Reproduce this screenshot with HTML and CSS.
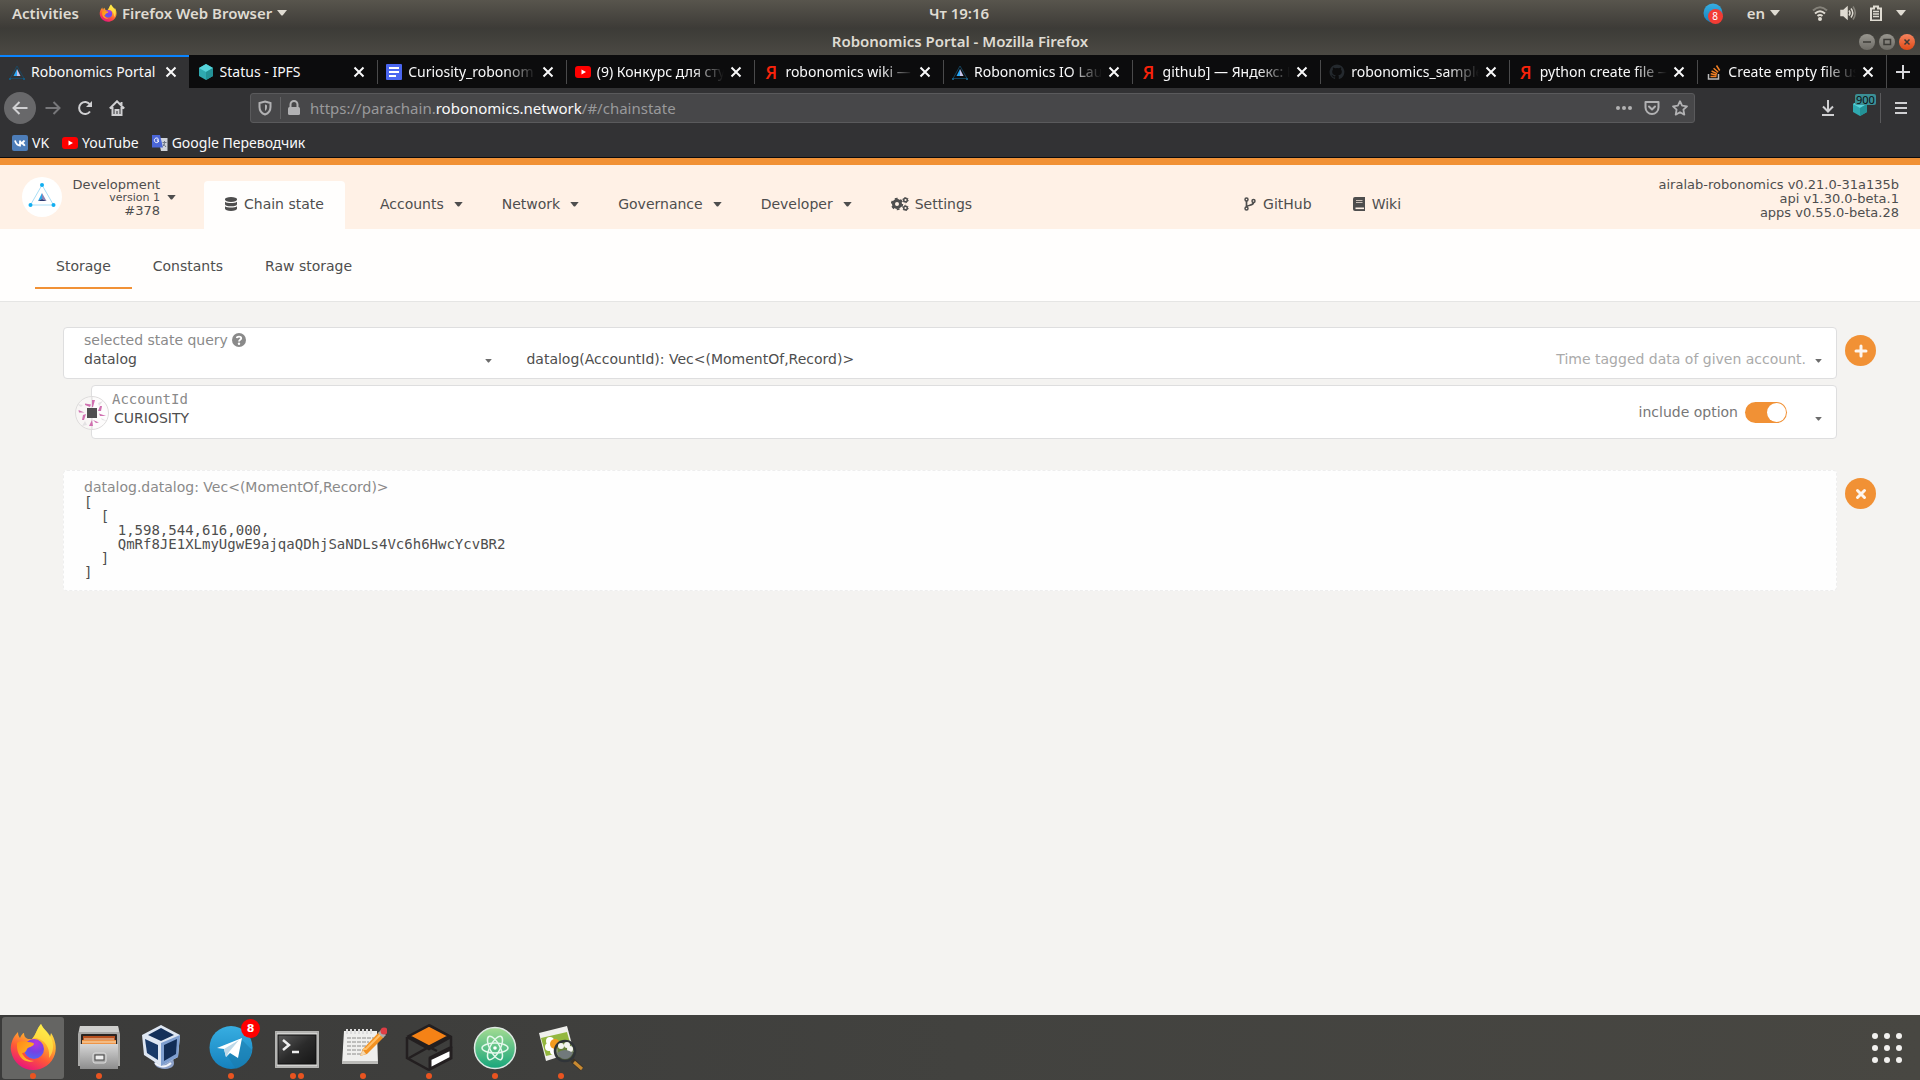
FILE: index.html
```html
<!DOCTYPE html>
<html lang="en">
<head>
<meta charset="utf-8">
<title>Robonomics Portal</title>
<link rel="stylesheet" href="styles.css">
</head>
<body>
<svg class="defs" aria-hidden="true">
  <defs>
    <linearGradient id="ffOuter" x1="0.8" y1="0" x2="0.3" y2="1"><stop offset="0" stop-color="#fff44f"/><stop offset="0.35" stop-color="#ffb02e"/><stop offset="0.65" stop-color="#ff5a36"/><stop offset="1" stop-color="#e8117f"/></linearGradient>
    <radialGradient id="ffGlobe" cx="0.6" cy="0.2" r="0.9"><stop offset="0" stop-color="#b833e1"/><stop offset="0.5" stop-color="#7542e5"/><stop offset="1" stop-color="#4a6cf7"/></radialGradient>
    <linearGradient id="ffFlame" x1="0" y1="0" x2="1" y2="1"><stop offset="0" stop-color="#ff8a16"/><stop offset="1" stop-color="#ffc32c"/></linearGradient>
    <linearGradient id="tgBlue" x1="0" y1="0" x2="0" y2="1"><stop offset="0" stop-color="#37aee2"/><stop offset="1" stop-color="#1581bd"/></linearGradient>
    <linearGradient id="steel" x1="0" y1="0" x2="0" y2="1"><stop offset="0" stop-color="#d6d6d6"/><stop offset="1" stop-color="#8d8d8d"/></linearGradient>
    <linearGradient id="atomGreen" x1="0" y1="0" x2="0" y2="1"><stop offset="0" stop-color="#a4dc92"/><stop offset="1" stop-color="#17a57b"/></linearGradient>
    <linearGradient id="screen" x1="0" y1="0" x2="1" y2="1"><stop offset="0" stop-color="#5a5a5a"/><stop offset="0.5" stop-color="#2b2b2b"/><stop offset="1" stop-color="#161616"/></linearGradient>
  </defs>
  <symbol id="firefox" viewBox="0 0 48 48">
    <path d="M2 28C1 21 4 14 9 9c0 3 1 5 2 6 1-3 3-5 4-5 0 3 1 5 4 6h4C27 12 28 5 32 1c2 5 7 8 9 13l1-4c4 6 6 14 4 21-3 10-12 16-22 16S4 40 2 28z" fill="url(#ffOuter)"/>
    <path d="M32 1c2 5 9 9 11 16 2 7 1 13-3 18 1-8-2-15-8-18-3-2-7-2-9-1 4-4 5-11 9-15z" fill="#fff04a" opacity=".65"/>
    <circle cx="25" cy="26" r="10" fill="url(#ffGlobe)"/>
    <path d="M8 20c3-3 8-1 11-1 4 0 6 1 6 2-1 3-6 3-7 5-1 3-3 4-5 4 2 5 7 8 12 8-9 3-18-4-17-18z" fill="url(#ffFlame)"/>
  </symbol>
  <symbol id="caret" viewBox="0 0 10 6"><path d="M0 0h10L6 5Q5 6 4 5z" fill="currentColor"/></symbol>
  <symbol id="close" viewBox="0 0 12 12"><path d="M1.500 1.500l9 9M10.500 1.500l-9 9" stroke="currentColor" stroke-width="2" fill="none"/></symbol>
  <symbol id="robonomics" viewBox="0 0 16 16"><path d="M8 2L1 14.500h14z" fill="none" stroke="#174c6c" stroke-width=".8"/><path d="M8 5v7H4.500z" fill="#2aa7f5"/><path d="M8 5l3.500 7H8z" fill="#c6c3ea"/><path d="M0 14h2v2H0zM14 14h2v2h-2z" fill="#15577d"/></symbol>
  <symbol id="ipfs" viewBox="0 0 16 16"><path d="M8 0l7 4v8l-7 4-7-4V4z" fill="#2fa9b0"/><path d="M8 0l7 4-7 4-7-4z" fill="#56d3da"/><path d="M8 8l7-4v8l-7 4z" fill="#239297"/></symbol>
  <symbol id="youtube" viewBox="0 0 16 16"><rect y="2" width="16" height="12" rx="3" fill="#f00"/><path d="M6.500 5.500v5L11 8z" fill="#fff"/></symbol>
  <symbol id="github" viewBox="0 0 16 16"><path d="M8 .5a7.500 7.500 0 0 0-2.400 14.600c.4.100.5-.2.500-.4v-1.400c-2.100.5-2.500-.9-2.500-.9-.4-.9-.9-1.100-.9-1.100-.7-.5.1-.5.1-.5.800.1 1.200.8 1.200.8.700 1.200 1.800.9 2.200.7.1-.5.300-.9.500-1.100-1.700-.2-3.500-.8-3.500-3.700 0-.8.300-1.500.8-2-.1-.2-.4-1 .1-2 0 0 .6-.2 2.100.8a7 7 0 0 1 3.700 0c1.400-1 2-.8 2-.8.500 1 .2 1.800.1 2 .5.500.8 1.200.8 2 0 2.900-1.800 3.500-3.500 3.700.3.200.5.700.5 1.400v2.100c0 .2.1.500.5.400A7.500 7.500 0 0 0 8 .5z" fill="#24292e"/></symbol>
</svg>

<div class="desktop">
<header class="topbar">
  <div class="topbar-side">
    <button class="sys" type="button">Activities</button>
    <button class="sys" type="button"><svg class="i18"><use href="#firefox"/></svg>Firefox Web Browser<svg class="sys-caret"><use href="#caret"/></svg></button>
  </div>
  <button class="sys" type="button">Чт 19:16</button>
  <div class="topbar-side topbar-end">
    <span class="tray-tg"><svg class="i20" viewBox="0 0 20 20"><circle cx="10" cy="10" r="9.500" fill="url(#tgBlue)"/></svg><span class="tray-count">8</span></span>
    <button class="sys lang" type="button">en<svg class="sys-caret"><use href="#caret"/></svg></button>
    <span class="tray">
      <svg class="i16" viewBox="0 0 16 16" fill="none" stroke="#dfdbd2" stroke-width="2"><path d="M1 5.500Q8-1 15 5.500" stroke="#85827a"/><path d="M3 8.500Q8 4 13 8.500"/><path d="M5.500 11Q8 9 10.500 11"/><circle cx="8" cy="14" r="1" fill="#dfdbd2"/></svg>
      <svg class="i16" viewBox="0 0 16 16" fill="none" stroke="#dfdbd2" stroke-width="1.500"><path d="M1 5.500h2.500L7 2.500v11L3.500 10.500H1z" fill="#dfdbd2"/><path d="M9 5.500q2 2.500 0 5M11 3.500q3.500 4.500 0 9"/><path d="M13 1.500q4.500 6.500 0 13" stroke="#85827a"/></svg>
      <svg class="i16" viewBox="0 0 16 16" fill="none" stroke="#dfdbd2"><path d="M3 3.500h3v-2h4v2h3v12H3z" stroke-width="2"/><path d="M5 6.500h6M5 9h6M5 11.500h6" stroke-width="1.500"/></svg>
      <svg class="sys-caret"><use href="#caret"/></svg>
    </span>
  </div>
</header>

<div class="titlebar">
  <h1 class="window-title">Robonomics Portal - Mozilla Firefox</h1>
  <div class="window-buttons">
    <button class="wb" type="button" aria-label="Minimize"><svg viewBox="0 0 16 16"><path d="M4 8h8" stroke="#3c3b37" stroke-width="1.500"/></svg></button>
    <button class="wb" type="button" aria-label="Maximize"><svg viewBox="0 0 16 16"><path d="M5 5.500h6.500v5H5z" stroke="#3c3b37" stroke-width="1.500" fill="none"/></svg></button>
    <button class="wb wb-close" type="button" aria-label="Close"><svg viewBox="0 0 16 16"><path d="M5.500 5.500l5 5M10.500 5.500l-5 5" stroke="#3c3b37" stroke-width="1.500"/></svg></button>
  </div>
</div>

<div class="tabstrip">
  <div class="tab tab-active"><svg class="i16"><use href="#robonomics"/></svg><span class="tab-title">Robonomics Portal</span><button class="tab-close" type="button" aria-label="Close tab"><svg><use href="#close"/></svg></button></div>
  <div class="tab"><svg class="i16"><use href="#ipfs"/></svg><span class="tab-title">Status - IPFS</span><button class="tab-close" type="button" aria-label="Close tab"><svg><use href="#close"/></svg></button></div>
  <div class="tab"><svg class="i16" viewBox="0 0 16 16"><rect width="16" height="16" rx="1" fill="#4a66f0"/><path d="M3 4h10M3 8h10M3 12h7" stroke="#fff" stroke-width="2"/></svg><span class="tab-title fade">Curiosity_robonom</span><button class="tab-close" type="button" aria-label="Close tab"><svg><use href="#close"/></svg></button></div>
  <div class="tab"><svg class="i16"><use href="#youtube"/></svg><span class="tab-title fade">(9) Конкурс для сту</span><button class="tab-close" type="button" aria-label="Close tab"><svg><use href="#close"/></svg></button></div>
  <div class="tab"><span class="ya">Я</span><span class="tab-title fade">robonomics wiki —</span><button class="tab-close" type="button" aria-label="Close tab"><svg><use href="#close"/></svg></button></div>
  <div class="tab"><svg class="i16"><use href="#robonomics"/></svg><span class="tab-title fade">Robonomics IO Lau</span><button class="tab-close" type="button" aria-label="Close tab"><svg><use href="#close"/></svg></button></div>
  <div class="tab"><span class="ya">Я</span><span class="tab-title fade">github] — Яндекс: Н</span><button class="tab-close" type="button" aria-label="Close tab"><svg><use href="#close"/></svg></button></div>
  <div class="tab"><svg class="i16"><use href="#github"/></svg><span class="tab-title fade">robonomics_sample</span><button class="tab-close" type="button" aria-label="Close tab"><svg><use href="#close"/></svg></button></div>
  <div class="tab"><span class="ya">Я</span><span class="tab-title fade">python create file —</span><button class="tab-close" type="button" aria-label="Close tab"><svg><use href="#close"/></svg></button></div>
  <div class="tab"><svg class="i16" viewBox="0 0 16 16" fill="none"><path d="M2.500 10v5h10v-5" stroke="#bcbbbb" stroke-width="1.500"/><path d="M4.500 12.500h6M4.700 9.800l6 1.200M5.600 7l5.500 2.600M7.600 4.200l4.600 4M10.500 1.500l3.200 5" stroke="#f48024" stroke-width="1.500"/></svg><span class="tab-title fade">Create empty file us</span><button class="tab-close" type="button" aria-label="Close tab"><svg><use href="#close"/></svg></button></div>
  <button class="tab-new" type="button" aria-label="New tab"><svg class="i16" viewBox="0 0 16 16"><path d="M8 1v14M1 8h14" stroke="#d7d7db" stroke-width="2"/></svg></button>
</div>

<div class="navbar">
  <div class="nav-buttons">
    <button class="nb nb-back" type="button" aria-label="Back"><svg class="i16" viewBox="0 0 16 16"><path d="M15.500 8H1.500M7.500 2l-6 6 6 6" /></svg></button>
    <button class="nb nb-off" type="button" aria-label="Forward"><svg class="i16" viewBox="0 0 16 16"><path d="M.5 8h14M8.500 2l6 6-6 6"/></svg></button>
    <button class="nb" type="button" aria-label="Reload"><svg class="i16" viewBox="0 0 16 16"><path d="M13 11.500A6 6 0 1 1 13 4.500"/><path d="M15 1v6H9z" fill="currentColor" stroke="none"/></svg></button>
    <button class="nb" type="button" aria-label="Home"><svg class="i16" viewBox="0 0 16 16"><path d="M.8 8.500L8 1.300l7.200 7.200M3.500 7v8h9V7M6.500 15v-5h3v5M12.500 2v4"/></svg></button>
  </div>
  <div class="urlbar">
    <svg class="i16" viewBox="0 0 16 16" fill="none" stroke="#b1b1b3" stroke-width="2"><path d="M8 1.500l5.500 1.500v4c0 4-2.500 6.500-5.500 7.500-3-1-5.500-3.500-5.500-7.500V3z"/><path d="M8 4.500c2 .4 2 .6 2 2.500 0 2-.8 3.200-2 4z" fill="#b1b1b3" stroke="none"/></svg>
    <span class="url-sep"></span>
    <svg class="i16" viewBox="0 0 16 16"><path d="M4.500 8V4.500a3.500 3.500 0 0 1 7 0V8" fill="none" stroke="#b1b1b3" stroke-width="2"/><rect x="2" y="7" width="12" height="8" rx="1.500" fill="#b1b1b3"/></svg>
    <span class="url">https://parachain.<b>robonomics.network</b>/#/chainstate</span>
    <div class="url-actions">
      <button class="ib" type="button" aria-label="Page actions"><svg class="i16" viewBox="0 0 16 16" fill="#b1b1b3"><circle cx="2" cy="8" r="2"/><circle cx="8" cy="8" r="2"/><circle cx="14" cy="8" r="2"/></svg></button>
      <button class="ib" type="button" aria-label="Save to Pocket"><svg class="i16" viewBox="0 0 16 16" fill="none" stroke="#b1b1b3" stroke-width="2" stroke-linejoin="round" stroke-linecap="round"><path d="M1.500 2h13v5.500a6.500 6.500 0 0 1-13 0z"/><path d="M5 6.500l3 3 3-3"/></svg></button>
      <button class="ib" type="button" aria-label="Bookmark page"><svg class="i16" viewBox="0 0 16 16" fill="none" stroke="#b1b1b3" stroke-width="1.800" stroke-linejoin="round"><path d="M8 1.200l2.100 4.500 4.900.6-3.600 3.400.9 4.900L8 12.200l-4.300 2.400.9-4.900L1 6.300l4.900-.6z"/></svg></button>
    </div>
  </div>
  <div class="nav-end">
    <button class="ib" type="button" aria-label="Downloads"><svg class="i16" viewBox="0 0 16 16" fill="none" stroke="#d0d0d2" stroke-width="2"><path d="M8 0v11M3 6.500l5 5 5-5M2 15h12"/></svg></button>
    <button class="ib ib-ipfs" type="button" aria-label="IPFS Companion"><svg class="i16"><use href="#ipfs"/></svg><span class="ipfs-count">900</span></button>
    <button class="ib ib-menu" type="button" aria-label="Menu"><svg class="i16" viewBox="0 0 16 16" stroke="#d0d0d2" stroke-width="2"><path d="M2 3h12M2 8h12M2 13h12"/></svg></button>
  </div>
</div>

<nav class="bookmarks" aria-label="Bookmarks">
  <a href="#vk"><svg class="i16" viewBox="0 0 16 16"><rect width="16" height="16" rx="2" fill="#4d7db8"/><path d="M3 5.500q1.500 5 5 5v-5M8 8q3 0 4.500-2.500M8 8q3 0 4.800 2.700" fill="none" stroke="#fff" stroke-width="1.800"/></svg>VK</a>
  <a href="#youtube-home"><svg class="i16"><use href="#youtube"/></svg>YouTube</a>
  <a href="#translate"><svg class="i16" viewBox="0 0 16 16"><path d="M6 3h9.500v13H9z" fill="#cfd3da"/><path d="M0 0h8l3 12.500H0z" fill="#4a66d8"/><path d="M7 5H4.800M6.500 4a2.300 2.300 0 1 0 .3 2H5" stroke="#fff" fill="none"/><path d="M10.500 7.500h4M12.500 6v1.500q0 3-2 4M11.500 9l2.500 3" stroke="#6c7686" fill="none"/></svg>Google Переводчик</a>
</nav>

<div class="app">
  <header class="app-header">
    <button class="chain" type="button">
      <svg class="chain-logo" viewBox="0 0 40 40"><circle cx="20" cy="20" r="20" fill="#fff"/><path d="M20 8L8.500 28h23z" fill="none" stroke="#a9def6" stroke-width="1"/><path d="M20 16v6l-4 2z" fill="#29a6e8"/><path d="M20 16l4.500 8L20 22z" fill="#8d83b5"/><path d="M16 24l4-2 4.500 2z" fill="#2b3a72"/><g fill="#12aef0"><circle cx="20" cy="8" r="2"/><circle cx="8.500" cy="28" r="2"/><circle cx="31.500" cy="28" r="2"/></g></svg>
      <span class="chain-info"><span>Development</span><small>version 1</small><span>#378</span></span>
      <svg class="nav-caret"><use href="#caret"/></svg>
    </button>
    <nav class="menu" aria-label="Main">
      <a class="menu-item menu-active" href="#/chainstate"><svg class="i14" viewBox="0 0 14 14" fill="currentColor"><path d="M1 2.200C1 1 3.500 0 7 0s6 1 6 2.200v.6C13 4 10.500 5 7 5S1 4 1 2.800z"/><path d="M1 4.700C2.300 5.700 4.500 6 7 6s4.700-.3 6-1.300v2.500C13 8.500 10.500 9.300 7 9.300S1 8.500 1 7.200z"/><path d="M1 9.200c1.300 1 3.500 1.300 6 1.300s4.700-.3 6-1.300v2.600C13 13 10.500 14 7 14s-6-1-6-2.200z"/></svg>Chain state</a>
      <a class="menu-item" href="#/accounts">Accounts<svg class="nav-caret"><use href="#caret"/></svg></a>
      <a class="menu-item" href="#/network">Network<svg class="nav-caret"><use href="#caret"/></svg></a>
      <a class="menu-item" href="#/governance">Governance<svg class="nav-caret"><use href="#caret"/></svg></a>
      <a class="menu-item" href="#/developer">Developer<svg class="nav-caret"><use href="#caret"/></svg></a>
      <a class="menu-item" href="#/settings"><svg class="gears" viewBox="0 0 18 14" fill="none" stroke="currentColor"><circle cx="6" cy="7" r="3.500" stroke-width="3"/><circle cx="6" cy="7" r="5.300" stroke-width="1.800" stroke-dasharray="2.800 2.750"/><circle cx="14.500" cy="3" r="1.800" stroke-width="1.500"/><circle cx="14.500" cy="3" r="2.700" stroke-width="1" stroke-dasharray="1.400 1.430"/><circle cx="14.500" cy="11" r="1.800" stroke-width="1.500"/><circle cx="14.500" cy="11" r="2.700" stroke-width="1" stroke-dasharray="1.400 1.430"/></svg>Settings</a>
    </nav>
    <nav class="menu menu-ext" aria-label="External">
      <a class="menu-item" href="#github"><svg class="i14" viewBox="0 0 14 14" fill="none" stroke="currentColor" stroke-width="1.500"><circle cx="3.500" cy="2.500" r="1.500"/><circle cx="3.500" cy="11.500" r="1.500"/><circle cx="10.500" cy="4" r="1.500"/><path d="M3.500 4v6M10.500 5.500c0 3.500-6 2-7 4.500" stroke-width="1.700"/></svg>GitHub</a>
      <a class="menu-item" href="#wiki"><svg class="i14" viewBox="0 0 14 14"><path d="M3 0h10v14H3a2 2 0 0 1-2-2V2a2 2 0 0 1 2-2z" fill="currentColor"/><path d="M4 3.500h6.500M4 5.500h6.500" stroke="#cbc0b8"/><path d="M3.500 11.300H12" stroke="#fff1e6" stroke-width="1.600"/></svg>Wiki</a>
    </nav>
    <div class="versions"><span>airalab-robonomics v0.21.0-31a135b</span><span>api v1.30.0-beta.1</span><span>apps v0.55.0-beta.28</span></div>
  </header>
  <nav class="subtabs" aria-label="Chain state">
    <a class="subtab subtab-active" href="#/chainstate">Storage</a>
    <a class="subtab" href="#/chainstate/constants">Constants</a>
    <a class="subtab" href="#/chainstate/raw">Raw storage</a>
  </nav>

  <main class="content">
    <section class="row">
      <div class="stack">
        <div class="card query">
          <div class="field query-section">
            <label for="section">selected state query <svg class="i14" viewBox="0 0 14 14"><circle cx="7" cy="7" r="7" fill="#8a8a8a"/><path d="M4.800 5.200C5 3.200 9.200 3 9.200 5.300 9.200 6.900 7 6.800 7 8.500" fill="none" stroke="#fff" stroke-width="1.800"/><circle cx="7" cy="10.800" r="1.200" fill="#fff"/></svg></label>
            <div class="picker"><select id="section"><option>datalog</option></select><svg class="drop"><use href="#caret"/></svg></div>
          </div>
          <div class="field query-method">
            <div class="picker"><select aria-label="method"><option>datalog(AccountId): Vec&lt;(MomentOf,Record)&gt;</option></select><span class="hint">Time tagged data of given account.</span><svg class="drop"><use href="#caret"/></svg></div>
          </div>
        </div>
        <div class="card account">
          <svg class="avatar" viewBox="0 0 34 34"><circle cx="17" cy="17" r="16.500" fill="#fbfafa" fill-opacity=".5" stroke="#dedcdc"/><path d="M17 0v34" stroke="#dedcdc"/><g fill="#d070b0"><path d="M17 4h3l-2 7h-1z"/><path d="M10 7.500l6 1-1 2.500-5-2z"/><path d="M27 10l-1 5h-3l2-5z"/><path d="M24 17.500l7 2.500h-6z"/><path d="M3.500 14l6 2.500H4z"/><path d="M11 18l-2 6H7l1-5z"/><path d="M17 24l1 6h-4z"/><path d="M18 24l6 2.500-3 .5z"/></g><path d="M23 7l5-2-4 5zM10 25l-3 5 5-1zM26 22l6 3-5-1zM6 11L2 8l6 1z" fill="#e4e2e4"/><rect x="12" y="12" width="10" height="10" fill="#504f50"/></svg>
          <div class="field account-field"><label class="mono" for="account">AccountId</label><input id="account" type="text" value="CURIOSITY"></div>
          <label class="toggle-label" for="include">include option</label><input class="toggle" id="include" type="checkbox" checked>
          <svg class="drop account-drop"><use href="#caret"/></svg>
        </div>
      </div>
      <button class="round" type="button" aria-label="Add query"><svg viewBox="0 0 14 14"><path d="M7 2v10M2 7h10"/></svg></button>
    </section>
    <section class="row">
      <div class="result">
        <h2>datalog.datalog: Vec&lt;(MomentOf,Record)&gt;</h2>
<pre class="mono">[
  [
    1,598,544,616,000,
    QmRf8JE1XLmyUgwE9ajqaQDhjSaNDLs4Vc6h6HwcYcvBR2
  ]
]</pre>
      </div>
      <button class="round" type="button" aria-label="Remove result"><svg viewBox="0 0 14 14"><path d="M3.500 3.500l7 7M10.500 3.500l-7 7"/></svg></button>
    </section>
  </main>
</div>

<footer class="dock">
  <button class="launcher launcher-active" type="button" aria-label="Firefox"><svg><use href="#firefox"/></svg><span class="dots"><i></i></span></button>
  <button class="launcher" type="button" aria-label="Files"><svg viewBox="0 0 48 48"><path d="M5 3h38l2 8v32H3V11z" fill="#a9a9a7"/><path d="M5 3h38l1 6H4z" fill="#d0d0ce"/><rect x="6" y="11" width="36" height="11" rx="1" fill="#2b2522"/><path d="M8 13h32v9H8z" fill="#b8501f"/><path d="M7 17h34v5H7z" fill="#ee9548"/><path d="M9 16h30M7 19h34" stroke="#f8e0bd"/><path d="M5 21h38v25H5z" fill="url(#steel)"/><rect x="18" y="30" width="13" height="10" rx="2" fill="#aaa" stroke="#ddd"/><rect x="20" y="32" width="9" height="5" fill="#eee" stroke="#444"/></svg><span class="dots"><i></i></span></button>
  <button class="launcher" type="button" aria-label="VirtualBox"><svg viewBox="0 0 48 48"><path d="M14 36q-3 9 10 10 12-1 8-10z" fill="#8ea2c9"/><path d="M14 40q8 7 16 0" stroke="#f1f4fa" stroke-width="2" fill="none"/><path d="M20 2L39 12 37 34 20 43 3 32 1 12z" fill="#dfe7f3"/><path d="M20 43V20l19-8-2 22z" fill="#7f9fd0"/><path d="M20 5l13 7-13 6-13-6z" fill="#14305a"/><path d="M4 16l13 6v15L6 30z" fill="#1a3a68"/><path d="M23 22l13-6-1 15-12 7z" fill="#122d56"/></svg></button>
  <button class="launcher" type="button" aria-label="Telegram"><svg viewBox="0 0 48 48"><circle cx="24" cy="24.500" r="21.500" fill="url(#tgBlue)"/><path d="M33 15l12 12q-3 15-16 19l-8-12z" fill="#1a79aa" opacity=".5"/><path d="M10 25l25-10-4 20-8-5-4 4-2-8z" fill="#fff"/><path d="M17 26l15-9-10 12-3 5z" fill="#bed8e8"/></svg><span class="badge">8</span><span class="dots"><i></i></span></button>
  <button class="launcher" type="button" aria-label="Terminal"><svg viewBox="0 0 48 48"><rect x="2" y="8" width="44" height="37" rx="1" fill="#d3d3d1"/><path d="M3 9h42v35H3z" fill="none" stroke="#969694"/><rect x="5" y="12" width="38" height="29" fill="url(#screen)" stroke="#111"/><path d="M10 17l6 5-6 5M19 29h7" fill="none" stroke="#eee" stroke-width="2.500"/></svg><span class="dots"><i></i><i></i></span></button>
  <button class="launcher" type="button" aria-label="Text Editor"><svg viewBox="0 0 48 48"><path d="M5 8h33l1 33H3z" fill="#efefed"/><path d="M3 38h36v3H3z" fill="#bcbcb9"/><path d="M8 15h27M8 19h22M8 23h27M8 27h18M8 31h15" stroke="#8c8c8a" stroke-dasharray="4 1"/><path d="M8 6v5M12 6v5M16 6v5M20 6v5M24 6v5M28 6v5M32 6v5" stroke="#ddd" stroke-width="2"/><path d="M21 33l3-7L40 9l5 5-17 17z" fill="#f29222"/><path d="M24 26l3 0L42 11" stroke="#ffc06a" stroke-width="2" fill="none"/><path d="M21 33l3-6 3 4z" fill="#f3d9b2"/><path d="M39 10l3-3 5 5-3 3z" fill="#aaa"/><circle cx="45" cy="8" r="3.500" fill="#de3d45"/></svg><span class="dots"><i></i></span></button>
  <button class="launcher" type="button" aria-label="Layout Viewer"><svg viewBox="0 0 48 48"><path d="M24 2L46 14v10L24 35M2 14v21l22 12M4 35l20-11 8 4M2 14l22 12 22-12" fill="none" stroke="#231f20" stroke-width="2.500"/><path d="M24 2.500l20 10.500-20 10.500L4 13z" fill="#f58216" stroke="#231f20" stroke-width="2.500"/><path d="M25 36l21-10v9L25 46z" fill="#fff" stroke="#231f20" stroke-width="3"/></svg><span class="dots"><i></i></span></button>
  <button class="launcher" type="button" aria-label="Atom"><svg viewBox="0 0 48 48"><circle cx="24" cy="25" r="20.500" fill="url(#atomGreen)" stroke="#dfe8e4" stroke-width="1.500"/><g fill="none" stroke="#e4f8ec" stroke-width="1.500"><ellipse cx="24" cy="25" rx="13" ry="5"/><ellipse cx="24" cy="25" rx="13" ry="5" transform="rotate(62 24 25)"/><ellipse cx="24" cy="25" rx="13" ry="5" transform="rotate(118 24 25)"/></g><circle cx="24" cy="25" r="1.800" fill="#fff"/></svg><span class="dots"><i></i></span></button>
  <button class="launcher" type="button" aria-label="Image Viewer"><svg viewBox="0 0 48 48"><path d="M2 10l28-7 7 26-28 9z" fill="#f0f0ec"/><path d="M4 15l26-6 5 18-26 6z" fill="#93b73f"/><g fill="#fff"><circle cx="13" cy="18" r="4"/><circle cx="12" cy="24" r="4"/><circle cx="17" cy="28" r="4"/></g><circle cx="18" cy="21" r="5" fill="#f39a1f"/><path d="M35 37l10 9" stroke="#3b3328" stroke-width="5"/><path d="M37 39l8 7" stroke="#c98a31" stroke-width="3"/><circle cx="28" cy="28" r="10" fill="#566b38" fill-opacity=".7" stroke="#303438" stroke-width="2.500"/><g fill="#f4f4f0"><circle cx="24" cy="23" r="3"/><circle cx="30" cy="22" r="3"/><circle cx="33" cy="26" r="3"/></g><path d="M20 30q8-6 16 0-3 6-8 6t-8-6z" fill="#71797b"/></svg><span class="dots"><i></i></span></button>
  <button class="apps" type="button" aria-label="Show applications"><svg viewBox="0 0 30 30" fill="#f2f1ef"><circle cx="3" cy="3" r="3"/><circle cx="15" cy="3" r="3"/><circle cx="27" cy="3" r="3"/><circle cx="3" cy="15" r="3"/><circle cx="15" cy="15" r="3"/><circle cx="27" cy="15" r="3"/><circle cx="3" cy="27" r="3"/><circle cx="15" cy="27" r="3"/><circle cx="27" cy="27" r="3"/></svg></button>
</footer>
</div>
</body>
</html>
```
FILE: styles.css
```css
* { box-sizing: border-box; }
body { margin: 0; font-family: "DejaVu Sans", sans-serif; font-size: 14px; color: #4e4e4e; }
button { margin: 0; padding: 0; border: 0; background: none; font: inherit; color: inherit; }
a { color: inherit; text-decoration: none; }
svg { display: block; flex: none; }
.defs { position: absolute; width: 0; height: 0; }
.i14 { width: 14px; height: 14px; }
.i16 { width: 16px; height: 16px; }
.i18 { width: 18px; height: 18px; }
.i20 { width: 20px; height: 20px; }
.mono { font-family: "DejaVu Sans Mono", monospace; }

.desktop { display: flex; flex-direction: column; min-height: 100vh; }

/* System bars */
.topbar, .titlebar, .tabstrip, .navbar, .bookmarks { font-family: "Noto Sans", sans-serif; }
.topbar { display: flex; align-items: center; height: 28px; padding: 0 14px 2px 12px; background: linear-gradient(#58554d, #3d3b37); color: #dfdbd2; font-size: 15px; font-weight: 600; line-height: 20px; }
.topbar-side { display: flex; flex: 1; align-items: center; gap: 20px; }
.topbar-end { justify-content: flex-end; gap: 24px; }
.sys { display: flex; align-items: center; gap: 5px; white-space: nowrap; }
.sys-caret { width: 10px; height: 6px; }
.tray { display: flex; align-items: center; gap: 12px; margin-left: 8px; }
.tray-tg { position: relative; }
.tray-count { position: absolute; right: 0; bottom: -1px; width: 15px; height: 15px; border-radius: 50%; background: #f23c34; color: #fff; font-size: 10px; font-weight: 400; line-height: 15px; text-align: center; }

.titlebar { display: grid; grid-template-columns: 1fr auto 1fr; align-items: center; height: 27px; padding: 0 5px; background: linear-gradient(#3c3b37, #4b4943); color: #dfdbd2; }
.window-title { grid-column: 2; margin: 0; padding-bottom: 2px; font-size: 15px; font-weight: 600; line-height: 20px; }
.window-buttons { display: flex; gap: 4px; justify-content: flex-end; }
.wb { width: 16px; height: 16px; border-radius: 50%; background: linear-gradient(#98968f, #6e6c66); }
.wb-close { background: linear-gradient(#f5845f, #df4a16); }

/* Tabs */
.tabstrip { display: flex; height: 33px; background: #0c0c0d; color: #f9f9fa; }
.tab { position: relative; display: flex; flex: 1; align-items: center; gap: 6px; min-width: 0; padding: 0 12px 0 9px; }
.tab + .tab::before { content: ""; position: absolute; left: 0; top: 5px; bottom: 4px; width: 1px; background: #4a4a4b; }
.tab-active + .tab::before { background: none; }
.tab-active { padding-bottom: 2px; border-top: 2px solid #0a84ff; background: #323234; }
.tab-title { flex: 1; min-width: 0; overflow: hidden; white-space: nowrap; }
.fade { mask-image: linear-gradient(to right, #000 calc(100% - 32px), transparent); }
.tab-close { width: 12px; height: 12px; }
.tab-close svg { width: 12px; height: 12px; }
.tab-new { display: flex; align-items: center; justify-content: center; width: 34px; border-left: 1px solid #4a4a4b; }
.ya { width: 16px; color: #f8230b; font-family: "Open Sans", sans-serif; font-size: 18px; font-weight: 600; line-height: 20px; text-align: center; }

/* Navigation */
.navbar { display: flex; align-items: center; height: 40px; padding: 0 11px 0 4px; background: #323234; color: #d0d0d2; }
.nav-buttons { display: flex; width: 246px; }
.nb { display: flex; align-items: center; justify-content: center; width: 32px; height: 32px; }
.nb svg { fill: none; stroke: currentColor; stroke-width: 2; }
.nb-back { margin-right: 1px; border-radius: 50%; background: #68686a; }
.nb-off { color: #77777a; }
.urlbar { display: flex; flex: 1; align-items: center; height: 30px; padding: 0 6px; border: 1px solid #5a5a5c; border-radius: 3px; background: #474749; color: #99999b; }
.url-sep { width: 1px; height: 22px; margin: 0 5px 0 7px; background: #626264; }
.url { flex: 1; margin-left: 8px; font-size: 15px; line-height: 20px; }
.url b { font-weight: 400; color: #f9f9fa; }
.url-actions { display: flex; gap: 12px; }
.ib { display: flex; align-items: center; justify-content: center; height: 30px; }
.nav-end { display: flex; width: 214px; gap: 16px; justify-content: flex-end; }
.ib-ipfs { position: relative; }
.ipfs-count { position: absolute; left: 3px; top: 1px; padding: 0 1px; border-radius: 2px; background: #3b8f95; color: #0c0c0d; font-size: 11px; line-height: 11px; }
.ib-menu { padding-left: 12px; margin-left: -4px; border-left: 1px solid #5a5a5c; }

.bookmarks { display: flex; align-items: center; gap: 13px; height: 30px; padding: 0 12px; border-bottom: 1px solid #0c0c0d; background: #323234; color: #f9f9fa; }
.bookmarks a { display: flex; align-items: center; gap: 4px; }

/* Portal */
.app { flex: 1; background: #f4f3f1; border-top: 7px solid #f19135; }
.app-header { display: flex; height: 64px; padding-right: 21px; background: #fff1e6; }
.chain { display: flex; align-items: center; width: 204px; padding-left: 22px; }
.chain-logo { width: 40px; height: 40px; }
.chain-info { display: flex; flex-direction: column; width: 98px; margin-right: 7px; font-size: 13px; line-height: 13px; text-align: right; }
.chain-info small { font-size: 11px; }
.nav-caret { width: 9px; height: 5px; }
.menu { display: flex; align-items: flex-end; }
.menu-item { display: flex; align-items: center; height: 48px; gap: 6px; padding: 0 19px 2px 20px; white-space: nowrap; }
.menu-item .nav-caret { margin-left: 4px; }
.menu-active { margin-right: 15px; padding: 0 21px 2px 20px; border-radius: 4px 4px 0 0; background: #fffefd; }
.gears { width: 18px; height: 14px; }
.menu-ext { margin-left: 232px; }
.menu-ext .menu-item { padding-right: 20px; }
.versions { display: flex; flex: 1; flex-direction: column; justify-content: center; padding-top: 3px; font-size: 13px; line-height: 14px; text-align: right; }
.subtabs { display: flex; height: 73px; padding: 13px 35px 12px; border-bottom: 1px solid #e5e5e4; background: #fffefd; }
.subtab { display: flex; align-items: center; padding: 2px 21px 0; border-bottom: 2px solid transparent; }
.subtab-active { border-color: #f19135; }

.content { display: flex; flex-direction: column; gap: 31px; padding: 25px 44px 0 63px; }
.row { display: flex; align-items: flex-start; gap: 8px; }
.row .round { margin-top: 8px; }
.stack { display: flex; flex: 1; flex-direction: column; gap: 6px; }
.card { border: 1px solid #dededf; border-radius: 4px; background: #fff; }
.query { display: flex; height: 52px; padding: 3px 14px 0 20px; }
.field { display: flex; flex-direction: column; }
.field label { display: flex; align-items: center; gap: 4px; height: 18px; color: #8a8a8a; }
.query-section { width: 23.5%; }
.query-method { flex: 1; padding: 18px 0 0 34px; }
.picker { display: flex; align-items: center; height: 20px; }
select { flex: 1; min-width: 0; height: 20px; margin: 0; padding: 0; border: 0; appearance: none; background: none; font: inherit; color: inherit; }
.hint { margin-right: 9px; color: #aaa; }
.drop { width: 7px; height: 4px; margin-top: 4px; color: #6c6c6c; }
.account { position: relative; display: flex; align-items: center; height: 54px; margin-left: 28px; padding: 0 14px 0 20px; }
.avatar { position: absolute; left: -17px; top: 10px; width: 34px; height: 34px; }
.account-field { flex: 1; padding-bottom: 6px; }
.account-field input { height: 20px; padding: 0 2px; border: 0; outline: 0; background: none; font: inherit; color: inherit; }
.toggle-label { margin-right: 7px; color: #777; }
.toggle { position: relative; width: 42px; height: 21px; margin: 0 28px 0 0; border-radius: 11px; appearance: none; background: #f19135; }
.toggle::before { content: ""; position: absolute; right: 1px; top: 1px; width: 19px; height: 19px; border-radius: 50%; background: #fff; }
.account-drop { margin-top: 14px; }
.round { display: flex; align-items: center; justify-content: center; width: 31px; height: 31px; border-radius: 50%; background: #f19135; }
.round svg { width: 14px; height: 14px; fill: none; stroke: #fdf5ee; stroke-width: 3; stroke-linecap: round; }
.result { flex: 1; padding: 8px 20px; border: 1px dashed #eee; border-radius: 4px; background: #fefefe; height: 121px; }
.result h2 { margin: 0; font-size: 14px; font-weight: 400; line-height: 16px; color: #8a8a8a; }
.result pre { margin: 0; line-height: 14px; }

/* Dock */
.dock { display: flex; height: 65px; background: linear-gradient(90deg, #3b3b3a, #42423f 50%, #484742); }
.launcher { position: relative; display: flex; justify-content: center; width: 62px; height: 62px; margin: 2px; padding-top: 6px; border-radius: 3px; }
.launcher svg { width: 48px; height: 48px; }
.launcher-active { background: #656563; }
.dots { position: absolute; left: 0; right: 0; bottom: 0; display: flex; justify-content: center; gap: 2px; }
.dots i { width: 6px; height: 6px; border-radius: 50%; background: #e95420; }
.badge { position: absolute; right: 2px; top: 2px; width: 19px; height: 19px; border-radius: 50%; background: #f00; color: #fff; font-size: 11px; font-weight: 700; line-height: 19px; text-align: center; }
.apps { display: flex; align-items: center; margin-left: auto; padding-right: 18px; }
.apps svg { width: 30px; height: 30px; }
```
